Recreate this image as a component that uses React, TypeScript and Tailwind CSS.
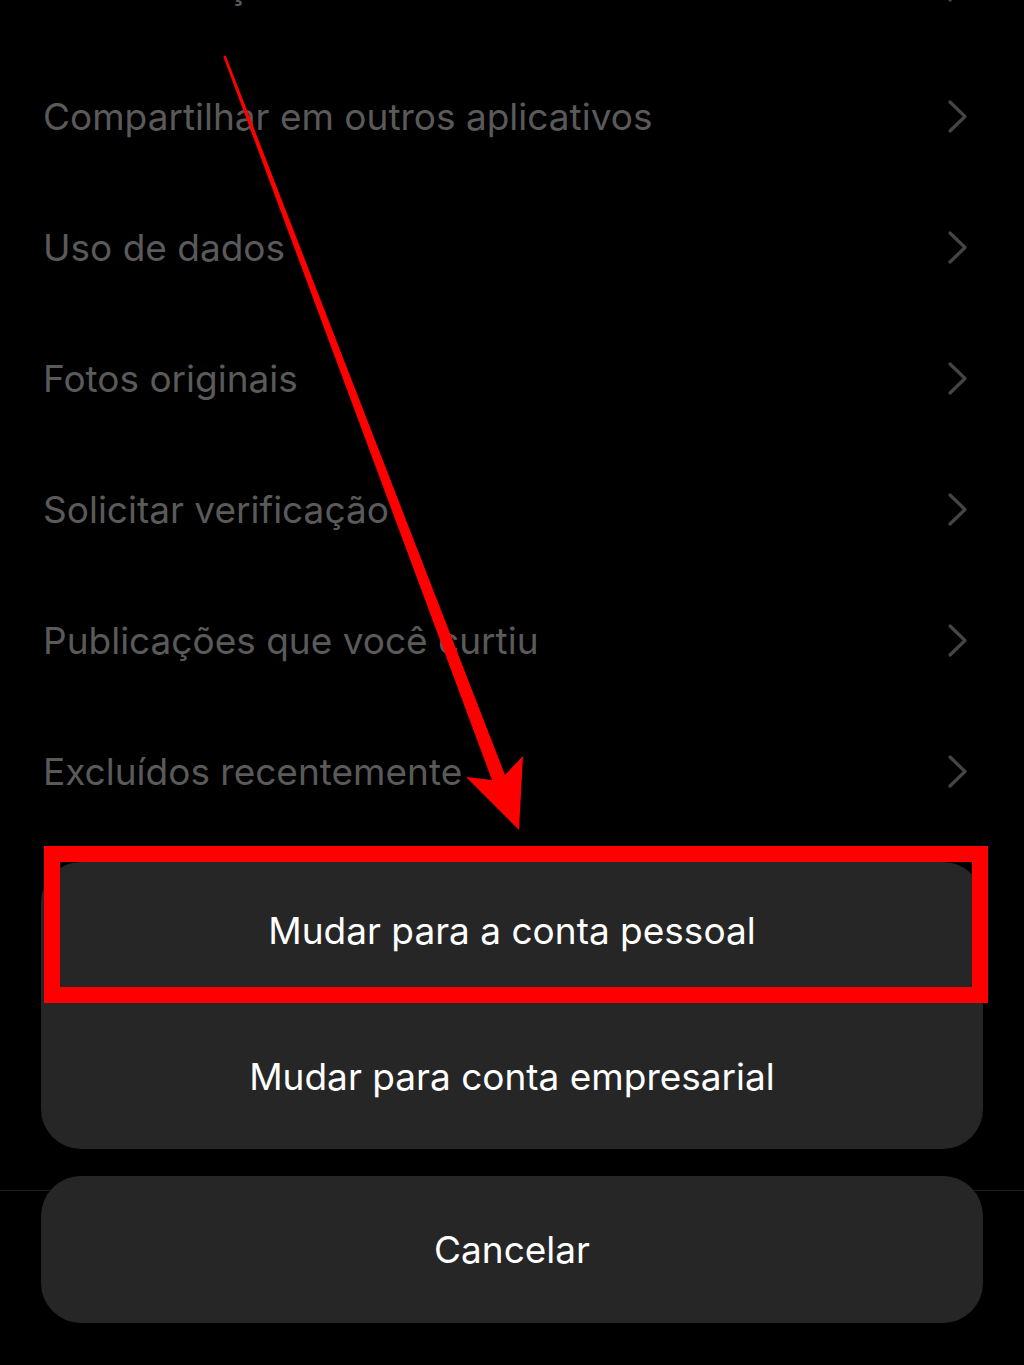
const rows = [
  "Sincronização de contatos",
  "Compartilhar em outros aplicativos",
  "Uso de dados",
  "Fotos originais",
  "Solicitar verificação",
  "Publicações que você curtiu",
  "Excluídos recentemente",
];

function Chevron() {
  return (
    <svg width="22" height="35" viewBox="0 0 22 35" fill="none">
      <polyline
        points="3,3 18,17.5 3,32"
        stroke="#454545"
        strokeWidth="3.2"
        strokeLinecap="round"
        strokeLinejoin="round"
      />
    </svg>
  );
}

function Row({ label }: { label: string }) {
  return (
    <div className="flex h-[131px] items-center justify-between pl-[43px] pr-[55px]">
      <span className="text-[37px] leading-none text-[#5a5a5a]">{label}</span>
      <Chevron />
    </div>
  );
}

export default function App() {
  return (
    <div
      className="relative h-[1365px] w-[1024px] overflow-hidden bg-black"
      style={{ fontFamily: "Inter, 'Noto Sans', sans-serif" }}
    >
      {/* settings list */}
      <div className="-mt-[80px] flex flex-col">
        {rows.map((r) => (
          <Row key={r} label={r} />
        ))}
      </div>

      {/* faint separator behind cancel */}
      <div className="absolute left-0 right-0 top-[1190px] h-px bg-[#1c1c1c]" />

      {/* bottom sheet */}
      <div className="relative mt-[25px] flex flex-col gap-[27px] px-[41px]">
        <div className="relative flex flex-col overflow-hidden rounded-[40px] bg-[#262626]">
          <div className="flex h-[143px] items-center justify-center pb-[6px] text-[37px] text-white">
            Mudar para a conta pessoal
          </div>
          <div className="flex h-[144px] items-center justify-center text-[37px] text-white">
            Mudar para conta empresarial
          </div>
        </div>
        <div className="flex h-[147px] items-center justify-center rounded-[40px] bg-[#262626] text-[37px] text-white">
          Cancelar
        </div>

        {/* highlight box */}
        <div className="absolute left-[44px] top-[-16px] h-[157px] w-[944px] border-[16px] border-[#ff0000]" />
      </div>

      {/* annotation arrow */}
      <svg className="pointer-events-none absolute left-0 top-0" width="1024" height="1365">
        <polygon
          points="223.3,56.5 225.7,55.5 505,775 523,756 519,830 466,777 492,780"
          fill="#ff0000"
        />
      </svg>
    </div>
  );
}
